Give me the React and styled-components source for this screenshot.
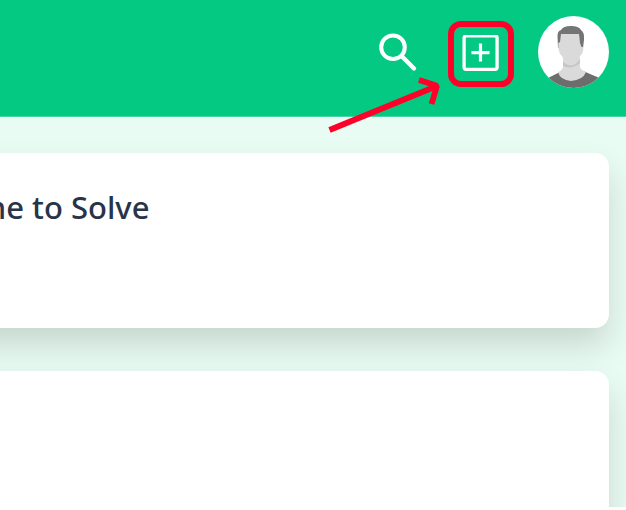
import React from "react";
import styled, { createGlobalStyle } from "styled-components";

const GlobalStyle = createGlobalStyle`
  html, body { margin: 0; background: #fff; overflow: hidden; }
  * { box-sizing: border-box; }
`;

const Page = styled.div`
  position: relative;
  width: 626px;
  height: 507px;
  overflow: hidden;
  display: flex;
  flex-direction: column;
  background: #e9fcf4;
  font-family: "Noto Sans", "Open Sans", sans-serif;
`;

const Header = styled.header`
  flex: none;
  height: 117px;
  padding: 16px 17px 0 0;
  display: flex;
  justify-content: flex-end;
  align-items: flex-start;
  background: #03c983;
  border-bottom: 1px solid #45d8a3;
  box-shadow: 0 1px 0 #f8fffc;
`;

const SearchButton = styled.button`
  width: 40px;
  height: 40px;
  margin: 16px 30px 0 0;
  padding: 0;
  border: 0;
  background: none;
  svg { display: block; }
`;

const AddButton = styled.button`
  width: 66px;
  height: 66px;
  margin: 5px 24px 0 0;
  padding: 0;
  display: grid;
  place-items: center;
  background: none;
  border: 6px solid #ff0029;
  border-radius: 13px;
  svg { display: block; }
`;

const Avatar = styled.div`
  width: 71px;
  height: 72px;
  border-radius: 50%;
  overflow: hidden;
  background: #fff;
  svg { display: block; }
`;

const Content = styled.main`
  display: flex;
  flex-direction: column;
  gap: 43px;
  padding: 36px 17px 0 0;
`;

const Card = styled.section`
  flex: none;
  height: ${(p) => p.$height}px;
  margin-left: -80px;
  padding-left: 80px;
  background: #fff;
  border-radius: 14px;
  box-shadow: 0 18px 32px rgba(0, 0, 0, 0.145);
`;

const TitleRow = styled.div`
  width: 149.5px;
  padding-top: 32px;
  display: flex;
  justify-content: flex-end;
`;

const Title = styled.h2`
  flex: none;
  margin: 0;
  font-size: 31px;
  line-height: 44px;
  font-weight: 500;
  white-space: nowrap;
  color: #273449;
`;

const Arrow = styled.svg`
  position: absolute;
  left: 319px;
  top: 70px;
`;

export default function App() {
  return (
    <>
      <GlobalStyle />
      <Page>
        <Header>
          <SearchButton aria-label="Search">
            <svg width="40" height="40" fill="none" stroke="#fff">
              <circle cx="15" cy="15.3" r="11.8" strokeWidth="4" />
              <path d="M23.5 24L36 36.5" strokeWidth="4.4" strokeLinecap="round" />
            </svg>
          </SearchButton>
          <AddButton aria-label="Add">
            <svg width="38" height="38" fill="none" stroke="#fff">
              <rect x="2.1" y="0.9" width="33" height="33.4" rx="2" strokeWidth="3.3" />
              <path d="M18.5 8.6V26.6M9.5 17.6H27.5" strokeWidth="3.2" />
            </svg>
          </AddButton>
          <Avatar>
            <svg width="72" height="72">
              <path d="M8 63Q16 59 26 54H43Q54 59 64 63V72H8Z" fill="#6d6d6d" />
              <path d="M25 42H42V51Q43 54 48 56Q45 64 33 65Q22 64 20 56Q25 54 25 50Z" fill="#dadada" />
              <path d="M25 46Q35 54 42 43V47Q34 54 25 50Z" fill="#c6c6c6" />
              <path d="M20 32L19.5 20Q19.5 15 23 14Q25 10 33 10Q41 10 43 14Q46.5 16 46 24L45 32Z" fill="#747474" />
              <path d="M23 18H41L42 27L43.5 31H45.5Q45 38 42 40Q40 48 34 48.5Q27 48 24 40Q21 38 20.3 31V27L22 26Z" fill="#dadada" />
            </svg>
          </Avatar>
        </Header>
        <Content>
          <Card $height={175}>
            <TitleRow>
              <Title>ne to Solve</Title>
            </TitleRow>
          </Card>
          <Card $height={200} />
        </Content>
        <Arrow width="130" height="70" fill="none" stroke="#ff0029">
          <path d="M10.5 60L118 16" strokeWidth="6" />
          <path d="M100 10L118 15.8L112.5 34" strokeWidth="5.8" strokeLinejoin="bevel" />
        </Arrow>
      </Page>
    </>
  );
}
